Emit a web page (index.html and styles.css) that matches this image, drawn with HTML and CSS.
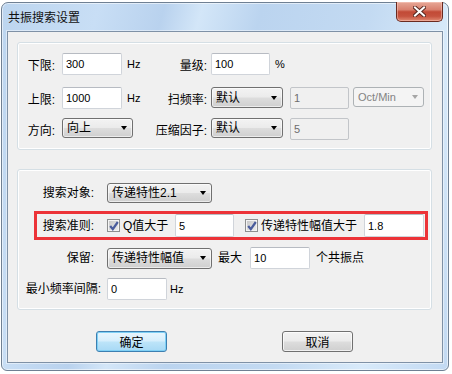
FILE: index.html
```html
<!DOCTYPE html>
<html lang="zh-CN">

<head>
  <meta charset="UTF-8">
  <meta name="viewport" content="width=device-width, initial-scale=1.0">
  <title>共振搜索设置</title>

  <link rel="stylesheet" href="styles.css">
</head>

<body>
  <div class="window">
    <div class="titlebar">
      <span class="title">共振搜索设置</span>
      <button type="button" class="close-btn">
        <svg width="13" height="11" viewBox="0 0 13 11">
          <path d="M2 1.5 L11 9.5 M11 1.5 L2 9.5" stroke="#5a2a22" stroke-width="4" stroke-linecap="square" fill="none" />
          <path d="M2 1.5 L11 9.5 M11 1.5 L2 9.5" stroke="#fff" stroke-width="2" stroke-linecap="square" fill="none" />
        </svg>
      </button>
    </div>

    <div class="client">
      <div class="group group-range">
        <div class="row">
          <div class="left-cell">
            <span class="lbl lbl-a">下限:</span>
            <input type="text" class="edit w60" value="300">
            <span class="unit">Hz</span>
          </div>
          <span class="lbl lbl-b">量级:</span>
          <input type="text" class="edit w59" value="100">
          <span class="unit">%</span>
        </div>
        <div class="row row-2">
          <div class="left-cell">
            <span class="lbl lbl-a">上限:</span>
            <input type="text" class="edit w60" value="1000">
            <span class="unit">Hz</span>
          </div>
          <span class="lbl lbl-b">扫频率:</span>
          <div class="combo w72"><span>默认</span><i class="arrow"></i></div>
          <input type="text" class="edit w59 disabled gap-7" value="1" disabled>
          <div class="combo w71 disabled gap-4"><span class="latin">Oct/Min</span><i class="arrow"></i></div>
        </div>
        <div class="row row-3">
          <div class="left-cell">
            <span class="lbl lbl-a">方向:</span>
            <div class="combo w71 h20"><span>向上</span><i class="arrow"></i></div>
          </div>
          <span class="lbl lbl-b">压缩因子:</span>
          <div class="combo w72 h20"><span>默认</span><i class="arrow"></i></div>
          <input type="text" class="edit w59 disabled gap-7" value="5" disabled>
        </div>
      </div>

      <div class="group group-search">
        <div class="row">
          <span class="lbl lbl-c">搜索对象:</span>
          <div class="combo w105 h20"><span>传递特性2.1</span><i class="arrow"></i></div>
        </div>
        <div class="row row-mark">
          <span class="lbl lbl-c lbl-mark">搜索准则:</span>
          <label class="chk-item item-q">
            <span class="check">
              <svg width="10" height="10" viewBox="0 0 10 10">
                <path d="M1.2 5 L3.8 8.2 L8.8 1" fill="none" stroke="#4a5c9c" stroke-width="2.2" />
              </svg>
            </span>
            <span>Q值大于</span>
          </label>
          <input type="text" class="edit w59 h23" value="5">
          <label class="chk-item item-amp">
            <span class="check">
              <svg width="10" height="10" viewBox="0 0 10 10">
                <path d="M1.2 5 L3.8 8.2 L8.8 1" fill="none" stroke="#4a5c9c" stroke-width="2.2" />
              </svg>
            </span>
            <span>传递特性幅值大于</span>
          </label>
          <input type="text" class="edit w60 h23" value="1.8">
        </div>
        <div class="row row-keep">
          <span class="lbl lbl-c">保留:</span>
          <div class="combo w105"><span>传递特性幅值</span><i class="arrow"></i></div>
          <span class="mid">最大</span>
          <input type="text" class="edit w60" value="10">
          <span class="tail">个共振点</span>
        </div>
        <div class="row row-min">
          <span class="lbl lbl-c lbl-long">最小频率间隔:</span>
          <input type="text" class="edit w60" value="0">
          <span class="unit unit-near">Hz</span>
        </div>
      </div>

      <div class="buttons">
        <button type="button" class="btn btn-default">确定</button>
        <button type="button" class="btn">取消</button>
      </div>
    </div>
  </div>
</body>

</html>
```

FILE: styles.css
```css
* {
  box-sizing: border-box;
}

body {
  margin: 0;
  background: #fff;
  font-family: "Liberation Sans", "Noto Sans CJK SC", sans-serif;
  font-size: 12px;
  line-height: 14px;
  color: #000;
}

.window {
  width: 448px;
  height: 369px;
  margin: 2px 0 0 1px;
  padding: 0 5px 7px;
  display: flex;
  flex-direction: column;
  border: 1px solid #6f8093;
  border-radius: 7px 7px 6px 6px;
  background: linear-gradient(105deg, #bcd5ef 0%, #c8def5 18%, #b9d2ee 30%, #d3e6f8 37%, #bbd4ef 48%, #c3daf2 68%, #d8eafa 84%, #c2d9f2 100%);
  box-shadow: inset 0 0 0 1px rgba(255, 255, 255, 0.55);
}

.titlebar {
  height: 28px;
  display: flex;
  align-items: center;
  justify-content: space-between;
  padding-left: 1px;
}

.title {
  font-family: "Noto Sans CJK SC", sans-serif;
  font-size: 12px;
  color: #111;
}

.close-btn {
  align-self: flex-start;
  width: 47px;
  height: 20px;
  margin-top: -1px;
  padding: 0;
  display: flex;
  align-items: center;
  justify-content: center;
  border: 1px solid #6a2a20;
  border-top: none;
  border-radius: 0 0 5px 5px;
  background: linear-gradient(#e7a897 0%, #d9816f 40%, #c24a36 52%, #c6533f 75%, #e08a72 100%);
  box-shadow: inset 0 0 0 1px rgba(255, 210, 200, 0.45);
}

.client {
  flex: 1;
  background: #f0f0f0;
  border: 1px solid #7f91a6;
  box-shadow: 0 0 0 1px rgba(255, 255, 255, 0.45);
}

.group {
  margin: 10px 10px 0 9px;
  border: 1px solid #d5dfe5;
  border-radius: 3px;
  box-shadow: inset 0 0 0 1px #fff;
}

.group-range {
  padding: 10px 0 9px;
}

.group-search {
  margin-top: 19px;
  padding: 13px 0 9px;
}

.row {
  display: flex;
  align-items: flex-start;
  height: 22px;
}

.row-2 {
  margin-top: 12px;
}

.row-3 {
  margin-top: 9px;
}

.left-cell {
  width: 134px;
  display: flex;
  align-items: flex-start;
}

.lbl {
  height: 22px;
  line-height: 22px;
  text-align: right;
  white-space: nowrap;
  flex-shrink: 0;
}

.lbl-a {
  width: 44px;
  padding-right: 7px;
  padding-top: 2px;
}

.lbl-b {
  width: 59px;
  padding-right: 4px;
  padding-top: 2px;
}

.lbl-c {
  width: 89px;
  padding-right: 13px;
  height: 20px;
  line-height: 20px;
}

.unit {
  font-size: 11px;
  line-height: 22px;
  padding-left: 5px;
}

.unit-near {
  padding-left: 3px;
}

.edit {
  height: 22px;
  margin: 0;
  padding: 0 3px;
  border: 1px solid #d0d4da;
  border-top-color: #b7bbc2;
  border-radius: 2px;
  background: #fff;
  font-family: "Liberation Sans", "Noto Sans CJK SC", sans-serif;
  font-size: 11px;
  color: #000;
  outline: none;
  flex-shrink: 0;
}

.edit.disabled {
  background: #f0f0f0;
  border-color: #c2c5c9;
  color: #6d6d6d;
}

.w59 {
  width: 59px;
}

.w60 {
  width: 60px;
}

.w71 {
  width: 71px;
}

.w72 {
  width: 72px;
}

.w105 {
  width: 105px;
}

.h20 {
  height: 20px !important;
}

.h23 {
  height: 23px;
}

.gap-7 {
  margin-left: 7px;
}

.gap-4 {
  margin-left: 4px;
}

.combo {
  height: 21px;
  padding: 0 5px 0 4px;
  display: flex;
  align-items: center;
  justify-content: space-between;
  border: 1px solid #707070;
  border-radius: 3px;
  background: linear-gradient(#f3f3f3 0%, #ebebeb 48%, #dddddd 52%, #cfcfcf 100%);
  box-shadow: inset 0 0 0 1px rgba(255, 255, 255, 0.6);
  white-space: nowrap;
  flex-shrink: 0;
}

.combo .arrow {
  width: 0;
  height: 0;
  border-left: 3.5px solid transparent;
  border-right: 3.5px solid transparent;
  border-top: 4px solid #000;
}

.combo.disabled {
  height: 20px;
  background: #f4f4f4;
  border-color: #adb2b5;
  box-shadow: none;
  color: #838383;
}

.combo.disabled .arrow {
  border-top-color: #a6a6a6;
}

.latin {
  font-size: 11px;
}

.row-mark {
  width: 394px;
  height: 29px;
  margin: 6px 0 0 16px;
  align-items: center;
  border: 3px solid #ec3338;
}

.lbl-mark {
  width: 70px;
}

.chk-item {
  display: flex;
  align-items: center;
  flex-shrink: 0;
}

.item-q {
  width: 68px;
}

.item-amp {
  width: 119px;
  margin-left: 11px;
}

.check {
  width: 13px;
  height: 13px;
  margin-right: 3px;
  display: flex;
  align-items: center;
  justify-content: center;
  border: 1px solid #8e8f8f;
  background: linear-gradient(135deg, #c4c4c4 0%, #dedede 60%, #efefef 100%);
  box-shadow: inset 0 0 0 1px #f4f4f4;
}

.row-keep {
  margin-top: 7px;
  align-items: center;
}

.mid {
  margin: 0 8px 0 6px;
  line-height: 22px;
}

.tail {
  margin-left: 6px;
  line-height: 22px;
}

.row-min {
  margin-top: 9px;
}

.lbl-long {
  height: 22px;
  line-height: 22px;
  padding-right: 6px;
}

.buttons {
  display: flex;
  gap: 115px;
  margin-top: 21px;
  padding-left: 88px;
}

.btn {
  width: 71px;
  height: 21px;
  padding: 0;
  border: 1px solid #707070;
  border-radius: 3px;
  background: linear-gradient(#f2f2f2 0%, #ebebeb 48%, #dddddd 52%, #cfcfcf 100%);
  box-shadow: inset 0 0 0 1px rgba(255, 255, 255, 0.7);
  font-family: "Noto Sans CJK SC", sans-serif;
  font-size: 12px;
  color: #000;
}

.btn-default {
  border-color: #3c7fb1;
  background: linear-gradient(#e9f6fd 0%, #d5eefc 48%, #bde4f9 52%, #a7d9f5 100%);
  box-shadow: inset 0 0 0 1px #7fd0f5;
}
```
